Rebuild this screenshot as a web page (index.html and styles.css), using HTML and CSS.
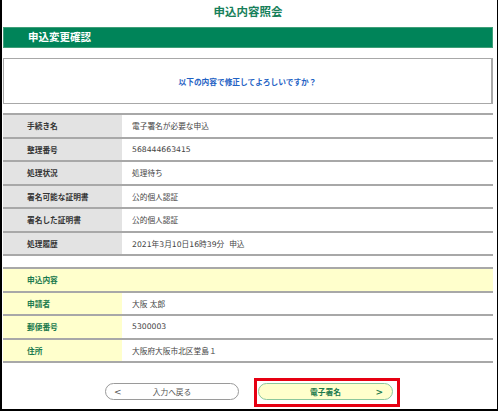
FILE: index.html
```html
<!DOCTYPE html>
<html lang="ja">
<head>
<meta charset="utf-8">
<title>申込内容照会</title>
<link rel="stylesheet" href="styles.css">
</head>
<body>
<div class="frame">
  <div class="page-title">申込内容照会</div>
  <div class="section-bar">申込変更確認</div>
  <div class="message">以下の内容で修正してよろしいですか？</div>

  <div class="info-table">
    <div class="row"><div class="label">手続き名</div><div class="value">電子署名が必要な申込</div></div>
    <div class="row"><div class="label">整理番号</div><div class="value">568444663415</div></div>
    <div class="row"><div class="label">処理状況</div><div class="value">処理待ち</div></div>
    <div class="row"><div class="label">署名可能な証明書</div><div class="value">公的個人認証</div></div>
    <div class="row"><div class="label">署名した証明書</div><div class="value">公的個人認証</div></div>
    <div class="row"><div class="label">処理履歴</div><div class="value">2021年3月10日16時39分&nbsp; 申込</div></div>
  </div>

  <div class="info-table apply">
    <div class="row head"><div class="label">申込内容</div></div>
    <div class="row"><div class="label">申請者</div><div class="value">大阪 太郎</div></div>
    <div class="row"><div class="label">郵便番号</div><div class="value">5300003</div></div>
    <div class="row"><div class="label">住所</div><div class="value">大阪府大阪市北区堂島１</div></div>
  </div>

  <div class="buttons">
    <button class="btn back"><span class="arrow">&lt;</span><span class="btn-text">入力へ戻る</span></button>
    <div class="highlight">
      <button class="btn sign"><span class="btn-text">電子署名</span><span class="arrow">&gt;</span></button>
    </div>
  </div>
</div>
</body>
</html>
```

FILE: styles.css
```css
html, body {
  margin: 0;
  padding: 0;
  background: #ffffff;
}

body {
  font-family: "DejaVu Sans", "Noto Sans CJK JP", sans-serif;
  font-size: 8px;
  color: #333333;
}

.frame {
  box-sizing: border-box;
  width: 498px;
  height: 411px;
  border-left: 2px solid #000000;
  border-right: 1px solid #000000;
  border-bottom: 2px solid #000000;
  padding: 0 4px 0 1px;
}

.page-title {
  height: 27px;
  line-height: 24px;
  text-align: center;
  font-size: 11.5px;
  font-weight: bold;
  color: #17805a;
}

.section-bar {
  box-sizing: border-box;
  height: 21px;
  line-height: 19px;
  background: #008459;
  border: 1px solid #3f9f78;
  color: #ffffff;
  font-size: 10.5px;
  font-weight: bold;
  padding-left: 24px;
}

.message {
  box-sizing: border-box;
  margin-top: 10px;
  height: 46px;
  border: 1px solid #a8a8a8;
  border-right-width: 2px;
  display: flex;
  align-items: center;
  justify-content: center;
  color: #1f62c4;
  font-weight: bold;
  font-size: 7.7px;
}

.info-table {
  margin-top: 9px;
  border-top: 2px solid #a8a8a8;
}

.info-table.apply {
  margin-top: 11px;
}

.row {
  display: grid;
  grid-template-columns: 119px 1fr;
  height: 23.5px;
  box-sizing: border-box;
  border-bottom: 2px solid #a8a8a8;
}

.label {
  background: #e3e3e3;
  font-weight: bold;
  color: #333333;
  padding-left: 24px;
  display: flex;
  align-items: center;
  font-size: 7.7px;
}

.value {
  padding-left: 10px;
  display: flex;
  align-items: center;
  font-size: 7.7px;
  color: #444444;
}

.apply .label {
  background: #ffffcc;
  color: #1a7a4c;
}

.apply .row.head {
  background: #ffffcc;
  grid-template-columns: 1fr;
}

.buttons {
  display: flex;
  align-items: flex-start;
  gap: 15px;
  margin-top: 15px;
  padding-left: 102px;
}

.btn {
  box-sizing: border-box;
  width: 134px;
  height: 17px;
  border-radius: 9px;
  font-family: inherit;
  font-size: 7.7px;
  position: relative;
  display: flex;
  align-items: center;
  justify-content: center;
  padding: 0;
}

.btn .arrow {
  position: absolute;
  top: 50%;
  transform: translateY(-50%);
  font-family: "DejaVu Sans", sans-serif;
  font-size: 9px;
}

.back {
  margin-top: 5px;
  background: #ffffff;
  border: 1px solid #9a9a9a;
  color: #555555;
}

.back .arrow {
  left: 8px;
  color: #555555;
}

.highlight {
  border: 3px solid #e60012;
  padding: 2px 4px 4px 1px;
}

.sign {
  width: 135px;
  background: #ffffcc;
  border: 1px solid #8cc79c;
  color: #1a7a4c;
  font-weight: bold;
}

.sign .arrow {
  right: 9px;
  color: #1a7a4c;
  font-weight: bold;
}
```
